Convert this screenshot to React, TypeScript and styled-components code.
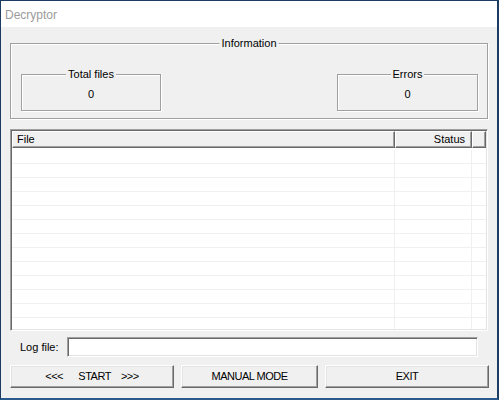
import React from "react";
import styled, { createGlobalStyle } from "styled-components";

const GlobalStyle = createGlobalStyle`
  html, body { margin: 0; padding: 0; background: #1c3c62; }
  body { font-family: "Liberation Sans", Arial, sans-serif; font-size: 11px; color: #000; }
  * { box-sizing: border-box; }
`;

const Window = styled.div`
  width: 499px;
  height: 400px;
  display: flex;
  flex-direction: column;
  border-style: solid;
  border-color: #1c3c62 #1c3c62 #2a5a8c #1c3c62;
  border-width: 1px 2px 2px 1px;
  background: #f0f0f0;
  overflow: hidden;
`;

const TitleBar = styled.div`
  height: 26px;
  flex: none;
  background: #ffffff;
  color: #9b9b9b;
  font-size: 12px;
  display: flex;
  align-items: center;
  padding: 1px 0 0 4px;
`;

const Client = styled.div`
  flex: 1;
  display: flex;
  flex-direction: column;
  padding: 16px 9px 0 9px;
`;

const GroupBox = styled.div<{ $w?: number; $h: number }>`
  position: relative;
  width: ${(p) => (p.$w ? `${p.$w}px` : "auto")};
  height: ${(p) => p.$h}px;
  border: 1px solid #a0a0a0;
  box-shadow: inset 1px 1px 0 #ffffff, 1px 1px 0 #ffffff;
`;

const GroupLabel = styled.span`
  position: absolute;
  top: -7px;
  left: 50%;
  transform: translateX(-50%);
  padding: 0 2px;
  background: #f0f0f0;
  line-height: 13px;
  white-space: nowrap;
`;

const InfoRow = styled.div`
  display: flex;
  justify-content: space-between;
  padding: 30px 9px 0 10px;
`;

const Counter = styled.div`
  text-align: center;
  padding-top: 13px;
  line-height: 13px;
`;

const ListView = styled.div`
  margin-top: 10px;
  height: 202px;
  display: flex;
  flex-direction: column;
  background: #ffffff;
  border: 1px solid;
  border-color: #a0a0a0 #ffffff #ffffff #a0a0a0;
  box-shadow: inset 1px 1px 0 #696969, inset -1px -1px 0 #e3e3e3;
  padding: 1px;
  overflow: hidden;
`;

const Header = styled.div`
  display: grid;
  grid-template-columns: 383px 77px 1fr;
  height: 17px;
  flex: none;
`;

const HeaderCell = styled.div<{ $right?: boolean }>`
  background: #f0f0f0;
  border-top: 1px solid #ffffff;
  border-left: 1px solid #ffffff;
  border-right: 1px solid #696969;
  border-bottom: 1px solid #696969;
  box-shadow: inset -1px -1px 0 #a0a0a0;
  line-height: 14px;
  padding: 0 6px 0 4px;
  text-align: ${(p) => (p.$right ? "right" : "left")};
  white-space: nowrap;
`;

const Body = styled.div`
  padding-top: 2px;
  flex: 1;
  overflow: hidden;
`;

const Row = styled.div`
  display: grid;
  grid-template-columns: 383px 77px 1fr;
  height: 14px;
  border-bottom: 1px solid #f0f0f0;
`;

const Cell = styled.div<{ $last?: boolean }>`
  border-right: ${(p) => (p.$last ? "none" : "1px solid #f0f0f0")};
`;

const LogRow = styled.div`
  margin-top: 6px;
  display: flex;
  align-items: center;
  height: 20px;
  padding-right: 10px;
`;

const LogLabel = styled.label`
  width: 57px;
  padding-left: 10px;
  flex: none;
`;

const LogInput = styled.div`
  flex: 1;
  height: 20px;
  background: #ffffff;
  border: 1px solid;
  border-color: #a0a0a0 #ffffff #ffffff #a0a0a0;
  box-shadow: inset 1px 1px 0 #696969, inset -1px -1px 0 #e3e3e3;
`;

const ButtonRow = styled.div`
  margin-top: 8px;
  display: flex;
  justify-content: space-between;
  width: 479px;
`;

const Button = styled.button<{ $w: number }>`
  width: ${(p) => p.$w}px;
  height: 23px;
  padding: 0 0 1px;
  background: #f0f0f0;
  font-family: "Liberation Sans", Arial, sans-serif;
  font-size: 11px;
  letter-spacing: -0.5px;
  color: #000;
  white-space: pre;
  border: 1px solid;
  border-color: #ffffff #696969 #696969 #ffffff;
  box-shadow: inset -1px -1px 0 #a0a0a0, inset 1px 1px 0 #e3e3e3;
  border-radius: 0;
`;

export default function App() {
  const rows = Array.from({ length: 13 });
  return (
    <>
      <GlobalStyle />
      <Window>
        <TitleBar>Decryptor</TitleBar>
        <Client>
          <GroupBox $h={76}>
            <GroupLabel>Information</GroupLabel>
            <InfoRow>
              <GroupBox $w={140} $h={37}>
                <GroupLabel>Total files</GroupLabel>
                <Counter>0</Counter>
              </GroupBox>
              <GroupBox $w={141} $h={37}>
                <GroupLabel>Errors</GroupLabel>
                <Counter>0</Counter>
              </GroupBox>
            </InfoRow>
          </GroupBox>
          <ListView>
            <Header>
              <HeaderCell>File</HeaderCell>
              <HeaderCell $right>Status</HeaderCell>
              <HeaderCell />
            </Header>
            <Body>
              {rows.map((_, i) => (
                <Row key={i}>
                  <Cell />
                  <Cell />
                  <Cell $last />
                </Row>
              ))}
            </Body>
          </ListView>
          <LogRow>
            <LogLabel>Log file:</LogLabel>
            <LogInput />
          </LogRow>
          <ButtonRow>
            <Button $w={164}>{"<<<      START    >>>"}</Button>
            <Button $w={137}>MANUAL MODE</Button>
            <Button $w={164}>EXIT</Button>
          </ButtonRow>
        </Client>
      </Window>
    </>
  );
}
